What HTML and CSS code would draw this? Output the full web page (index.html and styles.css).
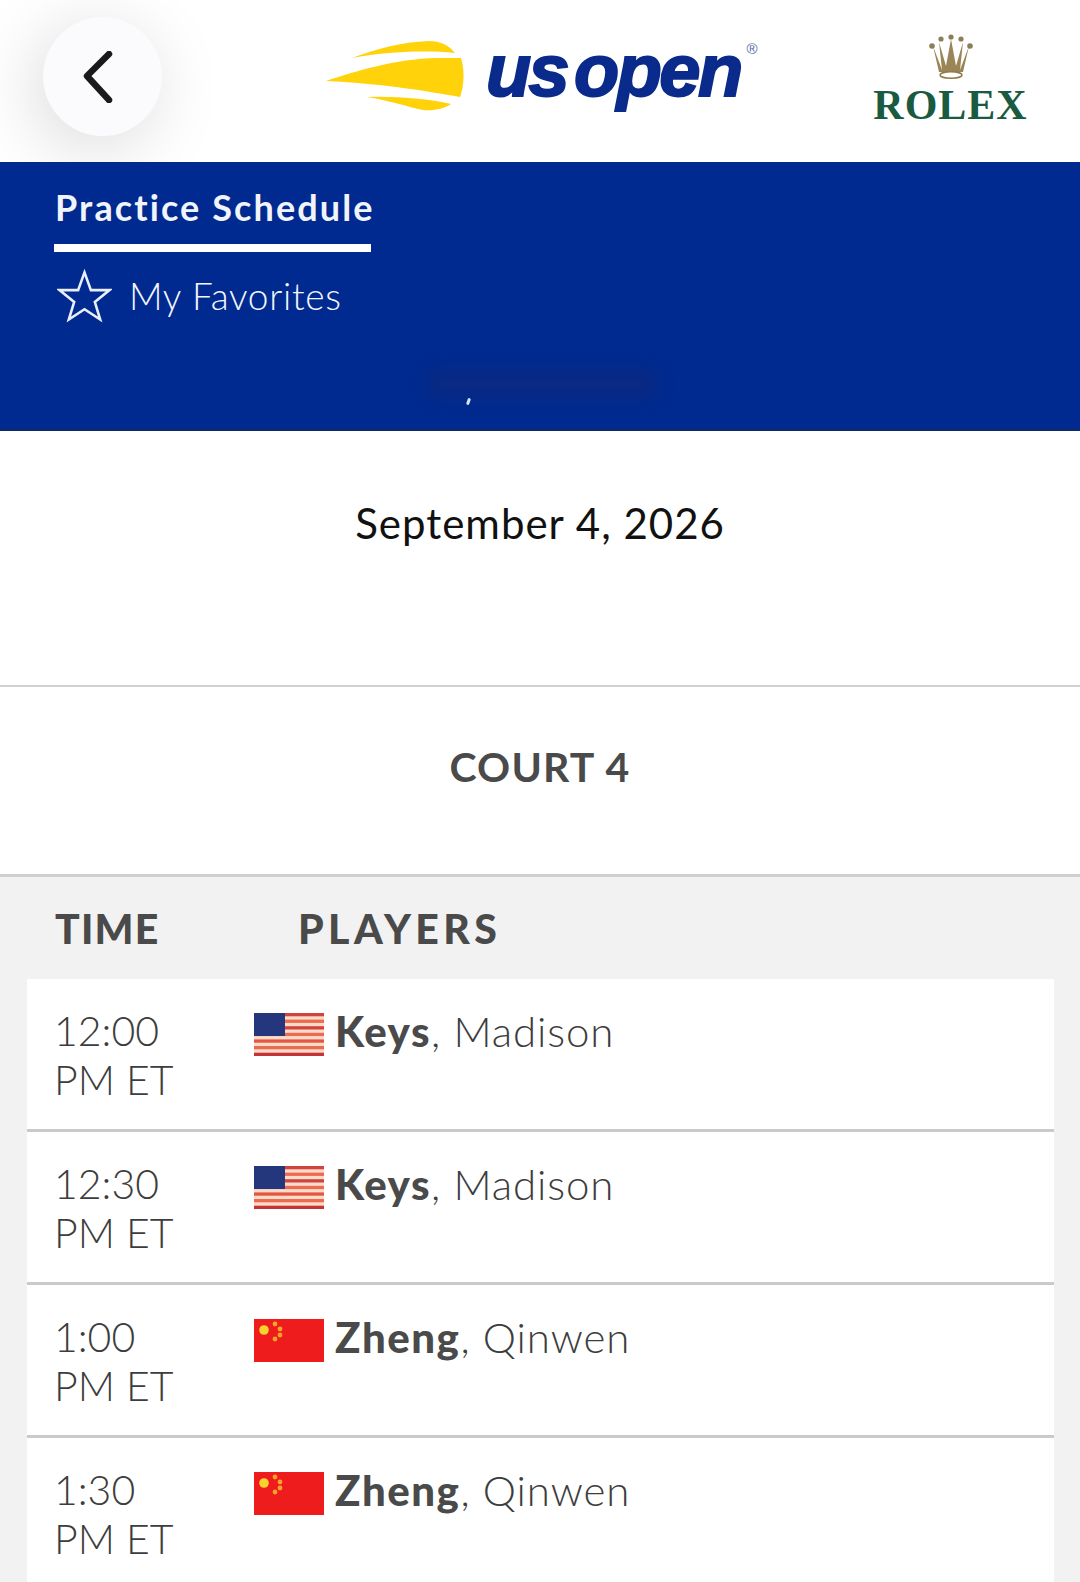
FILE: index.html
```html
<!DOCTYPE html>
<html lang="en">
<head>
<meta charset="utf-8">
<title>US Open Practice Schedule</title>
<link rel="stylesheet" href="styles.css">
</head>
<body>
<div class="page">
  <header class="topbar">
    <button class="back" aria-label="Back">
      <svg class="back-icon" viewBox="0 0 32 52"><path d="M27 3 L5 25 L27 49"/></svg>
    </button>
    <div class="usopen">
      <svg class="ball" viewBox="0 0 138 70">
        <path d="M26 17 C50 8 75 1 103 0 C114 0 123 4 129 12 C95 9 58 11 26 17Z"/>
        <path d="M0 40 C30 30 70 18 110 17 C122 17 131 17 135 17 C139 30 138 45 134 56 C100 50 60 43 0 40Z"/>
        <path d="M41 56 C70 55 105 58 125 63 C118 68 107 70 97 69 C82 66 62 59 41 56Z"/>
      </svg>
      <span class="wordmark">us open</span>
      <span class="reg">®</span>
    </div>
    <div class="rolex">
      <svg class="crown" viewBox="0 0 44 46">
        <g class="crown-points">
          <path d="M4 12 L13 36 L10 8 L17 32 L22 5 L27 32 L34 8 L31 36 L40 12 L34 38 H10Z"/>
        </g>
        <circle cx="3" cy="12" r="2.8"/><circle cx="12" cy="5" r="2.6"/><circle cx="22" cy="3" r="2.6"/><circle cx="32" cy="5" r="2.6"/><circle cx="41" cy="12" r="2.8"/>
        <ellipse class="crown-base" cx="22" cy="41" rx="11" ry="3.2"/>
      </svg>
      <span class="rolex-word">ROLEX</span>
    </div>
  </header>

  <section class="hero">
    <div class="tab-active">Practice Schedule</div>
    <div class="favorites">
      <svg class="star" viewBox="0 0 56 54"><path d="M28 3 L34.5 21 L53.5 21 L38.5 33 L44 51 L28 40.5 L12 51 L17.5 33 L2.5 21 L21.5 21Z"/></svg>
      <span>My Favorites</span>
    </div>
    <div class="smudge"></div>
    <div class="glint"></div>
  </section>

  <section class="date">September 4, 2026</section>
  <section class="court">COURT 4</section>

  <section class="schedule">
    <div class="columns">
      <div class="col-time">TIME</div>
      <div class="col-players">PLAYERS</div>
    </div>
    <div class="rows">
      <div class="row">
        <div class="time">12:00<br>PM ET</div>
        <svg class="flag" viewBox="0 0 70 43"><use href="#us"/></svg>
        <div class="player"><b>Keys</b>, Madison</div>
      </div>
      <div class="row">
        <div class="time">12:30<br>PM ET</div>
        <svg class="flag" viewBox="0 0 70 43"><use href="#us"/></svg>
        <div class="player"><b>Keys</b>, Madison</div>
      </div>
      <div class="row">
        <div class="time">1:00<br>PM ET</div>
        <svg class="flag" viewBox="0 0 70 43"><use href="#cn"/></svg>
        <div class="player"><b>Zheng</b>, Qinwen</div>
      </div>
      <div class="row">
        <div class="time">1:30<br>PM ET</div>
        <svg class="flag" viewBox="0 0 70 43"><use href="#cn"/></svg>
        <div class="player"><b>Zheng</b>, Qinwen</div>
      </div>
    </div>
  </section>
</div>

<svg class="defs" aria-hidden="true">
  <defs>
    <g id="us">
      <rect width="70" height="43" fill="#fbdccb"/>
      <rect y="0" width="70" height="3.3" fill="#d2423f"/>
      <rect y="6.6" width="70" height="3.3" fill="#ec6a50"/>
      <rect y="13.2" width="70" height="3.3" fill="#d2423f"/>
      <rect y="19.8" width="70" height="3.3" fill="#ec6a50"/>
      <rect y="26.4" width="70" height="3.3" fill="#e4563f"/>
      <rect y="33" width="70" height="3.3" fill="#ec6a50"/>
      <rect y="39.7" width="70" height="3.3" fill="#c43436"/>
      <rect width="31" height="23" fill="#24367c"/>
    </g>
    <g id="cn">
      <rect width="70" height="43" fill="#ee1c1c"/>
      <circle cx="10" cy="11" r="4.8" fill="#f6d32c"/>
      <circle cx="21" cy="5" r="2.4" fill="#f2a52a"/>
      <circle cx="26" cy="10" r="2.4" fill="#f2a52a"/>
      <circle cx="26" cy="16" r="2.4" fill="#f2a52a"/>
      <circle cx="21" cy="20" r="2.4" fill="#f2a52a"/>
    </g>
  </defs>
</svg>
</body>
</html>
```

FILE: styles.css
```css
* { box-sizing: border-box; }

html, body {
  margin: 0;
  padding: 0;
  background: #fff;
}

.page {
  width: 1080px;
  height: 1582px;
  overflow: hidden;
  font-family: Lato, "Liberation Sans", sans-serif;
  color: #4a4a4a;
}

.defs {
  position: absolute;
  width: 0;
  height: 0;
}

/* Top bar */
.topbar {
  height: 162px;
  display: flex;
  align-items: flex-start;
  padding: 17px 0 0 43px;
  overflow: hidden;
  background: #fff;
}

.back {
  flex: none;
  width: 119px;
  height: 119px;
  padding: 0;
  border: 0;
  border-radius: 50%;
  background: #fbfbfd;
  box-shadow: -8px 12px 70px rgba(0, 0, 0, 0.15);
  display: flex;
  align-items: center;
  justify-content: center;
}

.back-icon {
  width: 32px;
  height: 52px;
  margin-right: 9px;
  fill: none;
  stroke: #1a1a1a;
  stroke-width: 6.5;
  stroke-linecap: round;
  stroke-linejoin: round;
}

.usopen {
  flex: none;
  display: flex;
  align-items: flex-start;
  margin: 24px 0 0 164px;
  color: #0a2b8c;
}

.ball {
  flex: none;
  width: 138px;
  height: 70px;
  fill: #ffd20a;
}

.wordmark {
  flex: none;
  margin: -12px 0 0 22px;
  font-family: "Liberation Sans", sans-serif;
  font-size: 74px;
  font-weight: 700;
  font-style: italic;
  line-height: 84px;
  letter-spacing: -2.6px;
  word-spacing: -11px;
  white-space: nowrap;
  -webkit-text-stroke: 2px #0a2b8c;
}

.reg {
  margin: 0 0 0 6px;
  font-family: "Liberation Sans", sans-serif;
  font-size: 15px;
  line-height: 16px;
  color: #55679f;
}

.rolex {
  flex: none;
  margin: 17px 53px 0 auto;
  width: 153px;
  display: flex;
  flex-direction: column;
  align-items: center;
}

.crown {
  width: 44px;
  height: 46px;
  fill: #8c7d5a;
}

.crown-points path { fill: #9b8455; }

.crown-base {
  fill: #fff;
  stroke: #8f7a4c;
  stroke-width: 1.5;
}

.rolex-word {
  margin-top: 6px;
  font-family: "Liberation Serif", serif;
  font-size: 42px;
  font-weight: 700;
  line-height: 38px;
  letter-spacing: 1px;
  white-space: nowrap;
  color: #1a5a40;
}

/* Blue band */
.hero {
  position: relative;
  height: 269px;
  padding: 24px 0 0 54px;
  background: #002a8f;
  border-bottom: 2px solid #0f2a6b;
  color: #fff;
}

.tab-active {
  width: 317px;
  height: 66px;
  padding-left: 1px;
  border-bottom: 8px solid #fff;
  font-size: 36px;
  font-weight: 700;
  line-height: 42px;
  letter-spacing: 2.1px;
  white-space: nowrap;
  color: #f1f4fb;
}

.favorites {
  display: flex;
  align-items: center;
  gap: 17px;
  margin-top: 17px;
  padding-left: 3px;
  font-size: 37px;
  font-weight: 300;
  line-height: 54px;
  letter-spacing: 0.7px;
  color: #f4f6fc;
}

.star {
  flex: none;
  width: 55px;
  height: 54px;
  fill: none;
  stroke: #e9eefa;
  stroke-width: 2.6;
}

.smudge {
  position: absolute;
  left: 428px;
  top: 209px;
  width: 228px;
  height: 26px;
  background: #10297a;
  filter: blur(8px);
  opacity: 0.6;
}

.glint {
  position: absolute;
  left: 467px;
  top: 236px;
  width: 3px;
  height: 7px;
  border-radius: 2px;
  background: #d7e2f7;
  transform: rotate(20deg);
}

/* Date and court */
.date {
  height: 256px;
  padding-top: 63px;
  border-bottom: 2px solid #cfd1d1;
  text-align: center;
  font-size: 42px;
  line-height: 58px;
  letter-spacing: 1px;
  color: #111;
}

.court {
  height: 190px;
  padding-top: 55px;
  border-bottom: 3px solid #cfd1d1;
  text-align: center;
  font-size: 41px;
  font-weight: 700;
  line-height: 50px;
  letter-spacing: 1.2px;
  color: #4a4a4a;
}

/* Schedule */
.schedule {
  height: 706px;
  padding: 0 26px 0 27px;
  background: #f2f2f2;
}

.columns {
  height: 102px;
  display: flex;
  align-items: center;
  font-size: 41px;
  font-weight: 900;
  letter-spacing: 1.2px;
  color: #4a4a4a;
}

.col-time {
  width: 271px;
  padding-left: 28px;
}

.col-players {
  letter-spacing: 4.4px;
}

.rows {
  background: #fff;
}

.row {
  height: 153px;
  display: flex;
  align-items: flex-start;
  padding: 27px 0 0 27px;
  border-bottom: 3px solid #c8cbca;
}

.time {
  width: 200px;
  font-size: 41px;
  font-weight: 300;
  line-height: 49px;
  letter-spacing: 0;
  color: #3d3d3d;
}

.flag {
  flex: none;
  width: 70px;
  height: 43px;
  margin-top: 7px;
  filter: blur(0.4px);
}

.player {
  margin-left: 11px;
  font-size: 42px;
  font-weight: 300;
  line-height: 50px;
  letter-spacing: 0.9px;
  color: #3d3d3d;
}

.player b {
  font-weight: 900;
  letter-spacing: 1.5px;
  color: #4a4a4a;
}
```
